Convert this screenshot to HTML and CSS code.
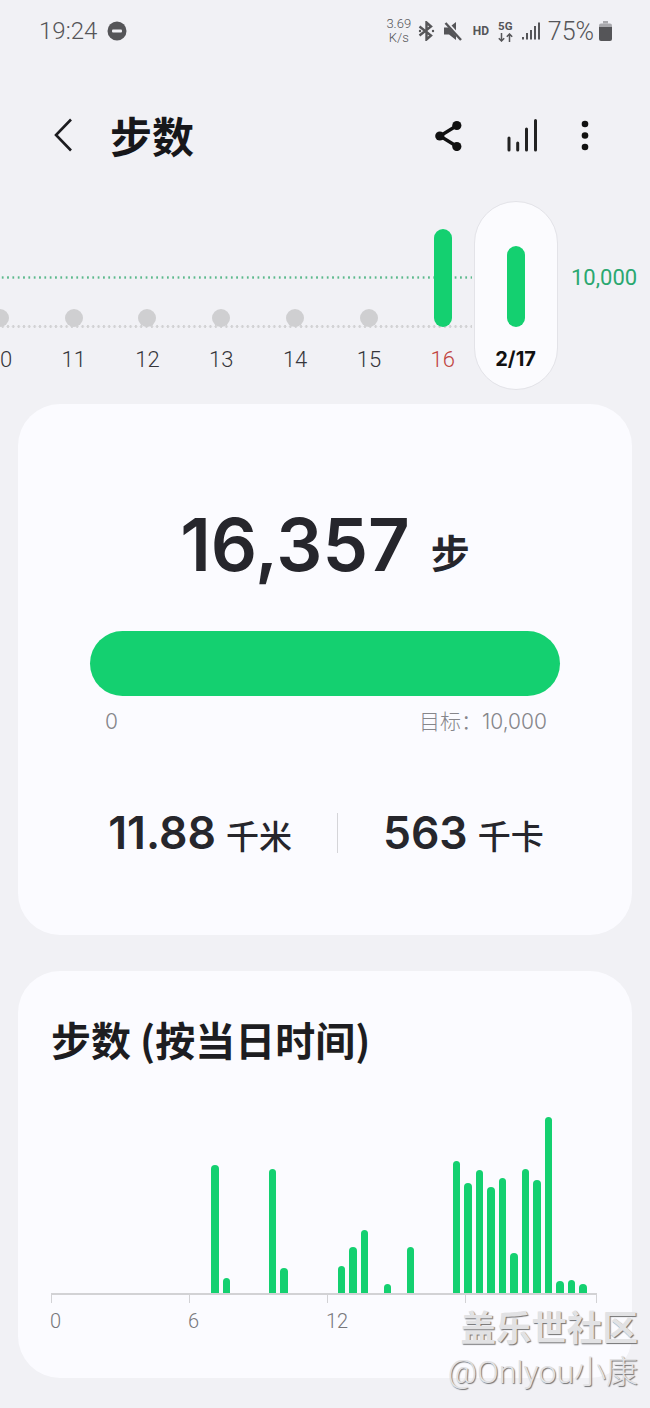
FILE: index.html
```html
<!DOCTYPE html>
<html lang="zh-CN">

<head>
    <meta charset="UTF-8">
    <meta name="viewport" content="width=device-width, initial-scale=1.0">
    <title>步数</title>
    <link rel="stylesheet" href="styles.css">
</head>

<body>
    <div class="status-bar">
        <div class="status-left">
            <span class="clock">19:24</span>
            <svg class="dnd" width="20" height="20" viewBox="0 0 20 20">
                <circle cx="10" cy="10" r="9.5" fill="#555558" />
                <rect x="5" y="8.6" width="10" height="2.8" rx="1" fill="#f1f1f5" />
            </svg>
        </div>
        <div class="status-right">
            <div class="speed"><span>3.69</span><span>K/s</span></div>
            <svg class="bt" width="17" height="20" viewBox="0 0 17 20" fill="none" stroke="#555558" stroke-width="2.4">
                <path d="M1.5 5.5 L13 14.5 L8.5 18.5 V1.5 L13 5.5 L1.5 14.5" />
                <circle cx="2" cy="10" r="1.2" fill="#555558" stroke="none" />
                <circle cx="15" cy="10" r="1.2" fill="#555558" stroke="none" />
            </svg>
            <svg class="mute" width="18" height="20" viewBox="0 0 18 20">
                <path d="M0 6.500 H5 L12 1 V19 L5 13.500 H0 Z" fill="#555558" />
                <path d="M1.5 0.500 L17 17.500" stroke="#f1f1f5" stroke-width="3.5" />
                <path d="M1.5 2 L17 19" stroke="#555558" stroke-width="2.4" />
            </svg>
            <span class="hd">HD</span>
            <div class="net">
                <span>5G</span>
                <svg width="15" height="9" viewBox="0 0 15 9" fill="none" stroke="#555558" stroke-width="1.5">
                    <path d="M3.5 0 V8 M0.8 5.2 L3.5 8 L6.2 5.2" />
                    <path d="M11.5 9 V1 M8.8 3.8 L11.5 1 L14.2 3.8" />
                </svg>
            </div>
            <svg class="signal" width="18" height="20" viewBox="0 0 18 20" fill="#555558">
                <rect x="0" y="16" width="2" height="2.5" />
                <rect x="4" y="12" width="2" height="6.5" />
                <rect x="8" y="9" width="2" height="9.5" />
                <rect x="12" y="5" width="2" height="13.5" />
                <rect x="16" y="1.500" width="2" height="17" />
            </svg>
            <span class="battery-text">75%</span>
            <svg class="battery" width="13" height="20" viewBox="0 0 13 20">
                <path d="M4 0 H9 V2.5 H4 Z" fill="#a9a9ad" />
                <path d="M2 2.500 H11 Q13 2.500 13 4.500 V6 H0 V4.500 Q0 2.500 2 2.500 Z" fill="#a9a9ad" />
                <path d="M0 6 H13 V18 Q13 20 11 20 H2 Q0 20 0 18 Z" fill="#555558" />
            </svg>
        </div>
    </div>

    <div class="app-bar">
        <svg class="back" width="20" height="34" viewBox="0 0 20 34" fill="none" stroke="#1b1b1f" stroke-width="2.6">
            <path d="M18 1.500 L3 17 L18 32.500" />
        </svg>
        <h1 class="title">步数</h1>
        <div class="actions">
            <svg width="30" height="32" viewBox="0 0 30 32" fill="#111">
                <path d="M24 6.500 L7 17 L24 27.500" fill="none" stroke="#111" stroke-width="3.4" />
                <circle cx="23.800" cy="6.500" r="4.600" />
                <circle cx="6.800" cy="17" r="4.600" />
                <circle cx="23.800" cy="27.500" r="4.600" />
            </svg>
            <svg width="32" height="34" viewBox="0 0 32 34" fill="none" stroke="#222" stroke-width="3" stroke-linecap="round">
                <path d="M3 20 V32 M11.700 25 V32 M20.500 11 V32 M29.500 2.500 V32" />
            </svg>
            <svg width="8" height="32" viewBox="0 0 8 32" fill="#111">
                <circle cx="4" cy="5" r="3.300" />
                <circle cx="4" cy="16.500" r="3.300" />
                <circle cx="4" cy="28" r="3.300" />
            </svg>
        </div>
    </div>

    <div class="trend">
        <div class="goal-line"></div>
        <div class="base-line"></div>
        <div class="days">
            <div class="day"><div class="day-plot"><div class="dot"></div></div><span class="day-label">10</span></div>
            <div class="day"><div class="day-plot"><div class="dot"></div></div><span class="day-label">11</span></div>
            <div class="day"><div class="day-plot"><div class="dot"></div></div><span class="day-label">12</span></div>
            <div class="day"><div class="day-plot"><div class="dot"></div></div><span class="day-label">13</span></div>
            <div class="day"><div class="day-plot"><div class="dot"></div></div><span class="day-label">14</span></div>
            <div class="day"><div class="day-plot"><div class="dot"></div></div><span class="day-label">15</span></div>
            <div class="day"><div class="day-plot"><div class="day-bar" style="height: 98px"></div></div><span class="day-label sunday">16</span></div>
            <div class="day today"><div class="day-plot"><div class="day-bar" style="height: 81px"></div></div><span class="day-label">2/17</span></div>
        </div>
        <span class="goal-label">10,000</span>
    </div>

    <div class="card summary">
        <div class="total">
            <span class="total-num">16,357</span>
            <span class="total-unit">步</span>
        </div>
        <div class="progress"></div>
        <div class="progress-labels">
            <span>0</span>
            <span>目标：10,000</span>
        </div>
        <div class="stats">
            <div class="stat"><span class="stat-num">11.88</span><span class="stat-unit">千米</span></div>
            <div class="stat-line"></div>
            <div class="stat"><span class="stat-num">563</span><span class="stat-unit">千卡</span></div>
        </div>
    </div>

    <div class="card hourly">
        <h2 class="hourly-title">步数 (按当日时间)</h2>
        <div class="hourly-bars">
            <div class="h-bar" style="grid-column: 15; height: 128px"></div>
            <div class="h-bar" style="grid-column: 16; height: 15px"></div>
            <div class="h-bar" style="grid-column: 20; height: 124px"></div>
            <div class="h-bar" style="grid-column: 21; height: 25px"></div>
            <div class="h-bar" style="grid-column: 26; height: 27px"></div>
            <div class="h-bar" style="grid-column: 27; height: 46px"></div>
            <div class="h-bar" style="grid-column: 28; height: 63px"></div>
            <div class="h-bar" style="grid-column: 30; height: 9px"></div>
            <div class="h-bar" style="grid-column: 32; height: 46px"></div>
            <div class="h-bar" style="grid-column: 36; height: 132px"></div>
            <div class="h-bar" style="grid-column: 37; height: 110px"></div>
            <div class="h-bar" style="grid-column: 38; height: 123px"></div>
            <div class="h-bar" style="grid-column: 39; height: 106px"></div>
            <div class="h-bar" style="grid-column: 40; height: 115px"></div>
            <div class="h-bar" style="grid-column: 41; height: 40px"></div>
            <div class="h-bar" style="grid-column: 42; height: 124px"></div>
            <div class="h-bar" style="grid-column: 43; height: 113px"></div>
            <div class="h-bar" style="grid-column: 44; height: 176px"></div>
            <div class="h-bar" style="grid-column: 45; height: 12px"></div>
            <div class="h-bar" style="grid-column: 46; height: 13px"></div>
            <div class="h-bar" style="grid-column: 47; height: 9px"></div>
        </div>
        <div class="axis">
            <div class="tick"></div>
            <div class="tick"></div>
            <div class="tick"></div>
            <div class="tick tick-last"></div>
        </div>
        <div class="axis-labels">
            <span>0</span>
            <span>6</span>
            <span>12</span>
        </div>
    </div>

    <div class="watermark">
        <span class="wm-top">盖乐世社区</span>
        <span class="wm-bottom">@Onlyou小康</span>
    </div>
</body>

</html>
```

FILE: styles.css
```css
* {
    margin: 0;
    padding: 0;
    box-sizing: border-box;
}

body {
    width: 650px;
    height: 1408px;
    position: relative;
    overflow: hidden;
    background: #f1f1f5;
    color: #26262c;
    font-family: "Inter", "Noto Sans CJK SC", sans-serif;
}

/* status bar */
.status-bar {
    height: 62px;
    display: flex;
    justify-content: space-between;
    align-items: center;
    padding: 0 38px 0 39px;
    color: #555558;
}

.status-left {
    display: flex;
    align-items: center;
    gap: 10px;
}

.clock {
    font-family: "Roboto", sans-serif;
    font-size: 24px;
    font-weight: 300;
}

.status-right {
    display: flex;
    align-items: center;
}

.speed {
    width: 26px;
    display: flex;
    flex-direction: column;
    align-items: center;
    font-family: "Roboto", sans-serif;
    font-size: 13px;
    font-weight: 300;
    line-height: 14px;
}

.bt {
    margin-left: 6px;
}

.mute {
    margin-left: 9px;
}

.hd {
    width: 16px;
    margin-left: 11px;
    font-family: "Roboto", sans-serif;
    font-size: 12px;
    font-weight: 700;
}

.net {
    width: 15px;
    margin-left: 9px;
    display: flex;
    flex-direction: column;
    align-items: center;
    gap: 1px;
    font-family: "Roboto", sans-serif;
    font-size: 11.500px;
    font-weight: 700;
    line-height: 11px;
}

.signal {
    margin-left: 9px;
}

.battery-text {
    margin-left: 8px;
    font-family: "Roboto", sans-serif;
    font-size: 25px;
    font-weight: 300;
}

.battery {
    margin-left: 5px;
}

/* title row */
.app-bar {
    height: 138px;
    display: flex;
    align-items: center;
    padding: 8px 61px 0 53px;
}

.back {
    flex: none;
}

.title {
    margin-left: 37px;
    font-family: "Noto Sans CJK SC", sans-serif;
    font-size: 42px;
    font-weight: 700;
    line-height: 50px;
    color: #17171a;
}

.actions {
    margin-left: auto;
    display: flex;
    align-items: center;
    gap: 43px;
}

/* week trend */
.trend {
    position: relative;
    height: 190px;
}

.goal-line,
.base-line {
    position: absolute;
    left: 0;
    width: 472px;
    height: 3px;
}

.goal-line {
    top: 76px;
    background: radial-gradient(circle, #5cb98c 1px, transparent 1.300px) 0 0 / 5.330px 3px;
}

.base-line {
    top: 125px;
    background: radial-gradient(circle, #d2d2d4 1.200px, transparent 1.500px) 0 0 / 5.330px 3px;
}

.days {
    position: relative;
    display: flex;
    margin-left: -37px;
}

.day {
    width: 73.800px;
    display: flex;
    flex-direction: column;
    align-items: center;
}

.day-plot {
    height: 127px;
    display: flex;
    align-items: flex-end;
}

.dot {
    width: 18px;
    height: 18px;
    border-radius: 50%;
    background: #cfcfd1;
}

.day-bar {
    width: 18px;
    border-radius: 9px;
    background: #14d070;
}

.day-label {
    margin-top: 20px;
    font-family: "Roboto", sans-serif;
    font-size: 22px;
    font-weight: 300;
    line-height: 26px;
    color: #36363b;
}

.sunday {
    color: #c0453f;
}

.today {
    width: 84px;
    height: 189px;
    margin: 1px 0 0 -6px;
    border: 1px solid #e3e3e8;
    border-radius: 42px;
    background: #fbfbfe;
}

.today .day-plot {
    height: 125px;
}

.today .day-label {
    margin-top: 19px;
    font-family: "Inter", sans-serif;
    font-size: 20px;
    font-weight: 700;
    color: #111;
}

.goal-label {
    position: absolute;
    left: 571px;
    top: 64px;
    font-family: "Roboto", sans-serif;
    font-size: 22px;
    font-weight: 400;
    line-height: 28px;
    color: #2aa870;
}

/* cards */
.card {
    margin: 0 18px;
    border-radius: 42px;
    background: #fbfbff;
}

.summary {
    height: 531px;
    margin-top: 14px;
    padding-top: 100px;
}

.total {
    height: 82px;
    display: flex;
    justify-content: center;
    align-items: center;
    gap: 21px;
}

.total-num {
    font-size: 72.500px;
    font-weight: 600;
    line-height: 82px;
}

.total-unit {
    margin-top: 12px;
    font-family: "Noto Sans CJK SC", sans-serif;
    font-size: 39px;
    font-weight: 700;
}

.progress {
    height: 65px;
    margin: 45px 72px 0;
    border-radius: 33px;
    background: #14d070;
}

.progress-labels {
    display: flex;
    justify-content: space-between;
    margin: 12px 85px 0 87px;
    font-size: 21px;
    line-height: 28px;
    font-weight: 300;
    color: #86868b;
}

.stats {
    margin-top: 72px;
    padding-left: 2px;
    display: flex;
    justify-content: center;
    align-items: center;
    gap: 45px;
}

.stat {
    display: flex;
    align-items: center;
    gap: 10px;
}

.stat-num {
    font-size: 44.500px;
    font-weight: 600;
    line-height: 50px;
}

.stat-unit {
    margin-top: 3px;
    font-family: "Noto Sans CJK SC", sans-serif;
    font-size: 33px;
    font-weight: 500;
    line-height: 40px;
}

.stat-line {
    width: 1px;
    height: 40px;
    background: #d5d5d9;
}

/* steps by hour */
.hourly {
    height: 407px;
    margin-top: 36px;
    padding: 42px 0 0 33px;
}

.hourly-title {
    font-family: "Noto Sans CJK SC", sans-serif;
    font-size: 40px;
    font-weight: 700;
    line-height: 52px;
    color: #1d1d21;
}

.hourly-bars {
    height: 228px;
    margin-left: -3px;
    display: grid;
    grid-template-columns: repeat(48, 11.500px);
    align-items: end;
}

.h-bar {
    grid-row: 1;
    justify-self: center;
    width: 7.500px;
    border-radius: 4px 4px 0 0;
    background: #14d070;
}

.axis {
    width: 546px;
    display: grid;
    grid-template-columns: 138px 138px 138px 132px;
    border-top: 2px solid #d2d2d5;
}

.tick {
    height: 8px;
    border-left: 1.500px solid #d2d2d5;
}

.tick-last {
    border-right: 1.500px solid #d2d2d5;
}

.axis-labels {
    margin: 6px 0 0 -1px;
    display: grid;
    grid-template-columns: 138px 138px 138px;
    font-family: "Roboto", sans-serif;
    font-size: 20px;
    font-weight: 300;
    line-height: 24px;
    color: #77777b;
}

/* forum watermark over the screenshot */
.watermark {
    position: absolute;
    right: 12px;
    top: 1303px;
    display: flex;
    flex-direction: column;
    align-items: flex-end;
    gap: 2px;
    font-family: "Noto Sans CJK SC", sans-serif;
    color: #e2e2e4;
    text-shadow: 1px 1px 1px #707072;
}

.wm-top {
    font-size: 35.500px;
    font-weight: 700;
    line-height: 46px;
}

.wm-bottom {
    font-family: "Roboto", "Noto Sans CJK SC", sans-serif;
    font-size: 32px;
    font-weight: 300;
    line-height: 42px;
}
```
